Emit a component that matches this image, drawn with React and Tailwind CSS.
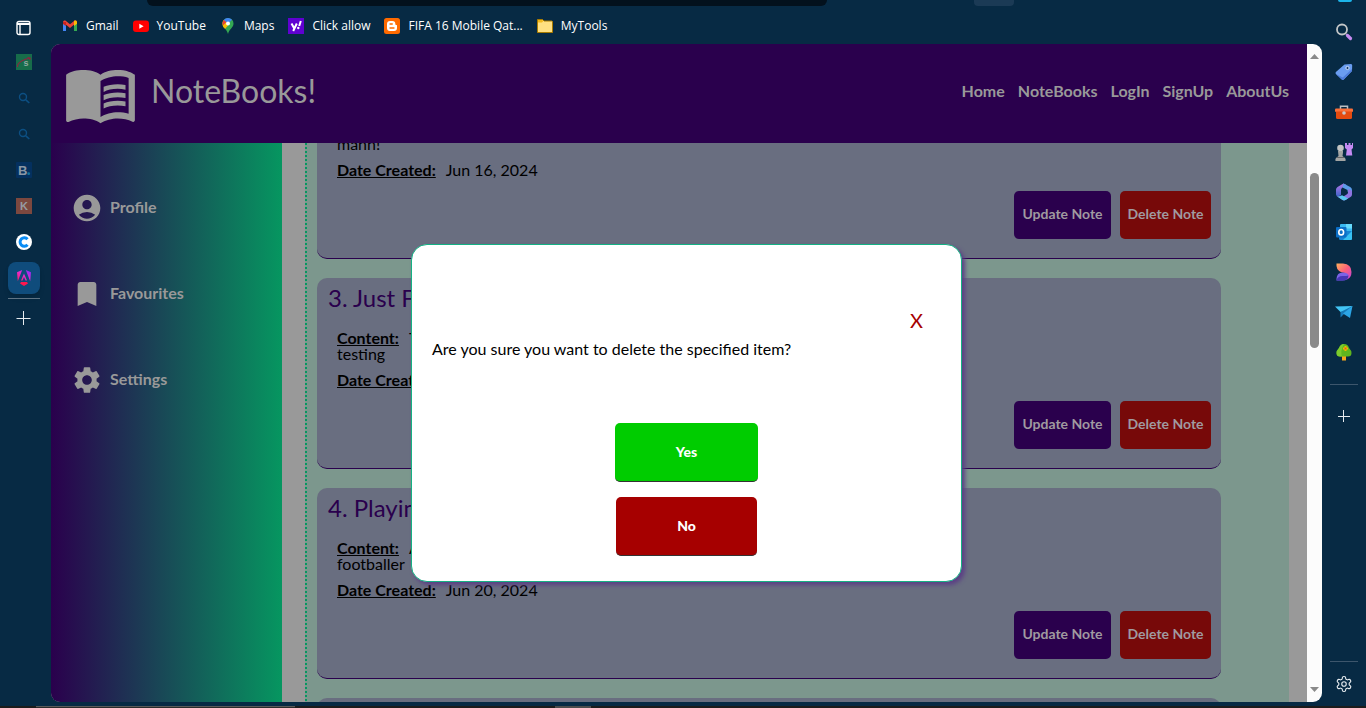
import { MdAccountCircle, MdBookmark, MdMenuBook, MdSettings } from "react-icons/md";
import { LuSettings } from "react-icons/lu";

const bookmarks = [
  { label: "Gmail", icon: GmailIcon },
  { label: "YouTube", icon: YouTubeIcon },
  { label: "Maps", icon: MapsIcon },
  { label: "Click allow", icon: YahooIcon },
  { label: "FIFA 16 Mobile Qat...", icon: BloggerIcon },
  { label: "MyTools", icon: FolderIcon },
];

const tabs = [
  { label: "Science", icon: ScienceIcon },
  { label: "Search", icon: DimSearchIcon },
  { label: "Search results", icon: DimSearchIcon },
  { label: "Booking", icon: BookingIcon },
  { label: "K", icon: KIcon },
  { label: "Coinbase", icon: CIcon },
];

const tools = [
  { label: "Search", icon: LensIcon },
  { label: "Shopping", icon: TagIcon },
  { label: "Tools", icon: ToolboxIcon },
  { label: "Games", icon: ChessIcon },
  { label: "Microsoft 365", icon: OfficeIcon },
  { label: "Outlook", icon: OutlookIcon },
  { label: "Designer", icon: DesignerIcon },
  { label: "Drop", icon: DropIcon },
  { label: "Tree", icon: TreeIcon },
];

const notes = [
  { title: "2. Good Morning", first: "Good morning", second: "mahn!", date: "Jun 16, 2024" },
  { title: "3. Just For Fun", first: "This note is for", second: "testing", date: "Jun 18, 2024" },
  { title: "4. Playing Football", first: "A very good", second: "footballer", date: "Jun 20, 2024" },
  { title: "5. Reading", first: "A new", second: "book", date: "Jun 21, 2024" },
];

function GmailIcon() {
  return (
    <svg viewBox="0 0 16 16" className="size-4">
      <path d="M1 4.5V13h3V7z" fill="#4285f4" />
      <path d="M15 4.5V13h-3V7z" fill="#34a853" />
      <path d="M1 4.2C1 2.6 2.8 2 4 3l4 3.2L12 3c1.2-1 3-.4 3 1.200L8 10z" fill="#ea4335" />
      <path d="M12 3c1.200-1 3-.4 3 1.200v1.600L12 8z" fill="#fbbc04" />
      <path d="M1 4.200V6l3 2V4z" fill="#c5221f" />
    </svg>
  );
}

function YouTubeIcon() {
  return (
    <svg viewBox="0 0 16 16" className="size-4">
      <rect y="2.500" width="16" height="11.500" rx="3" fill="#f00" />
      <path d="M6.300 5.700v5l4.300-2.500z" fill="#fff" />
    </svg>
  );
}

function MapsIcon() {
  return (
    <svg viewBox="0 0 16 16" className="size-4">
      <path d="M8 0a5.500 5.500 0 0 0-5.500 5.500C2.500 9.500 6.800 11 8 16c1.200-5 5.500-6.500 5.500-10.500A5.500 5.500 0 0 0 8 0z" fill="#34a853" />
      <path d="M3.800 2 8 5.500 4 10C3 8.700 2.500 7.200 2.500 5.500 2.500 4 3 3 3.800 2z" fill="#fbbc04" />
      <path d="M3.800 2 6 4 8 5.500 12 1.700A5.500 5.500 0 0 0 3.800 2z" fill="#4285f4" />
      <path d="M3.800 2 6.500 4.300 3 7.500C2.200 5.500 2.600 3.300 3.800 2z" fill="#ea4335" />
      <path d="M3 7.500 6.300 4.500 8 7.500 5 11z" fill="#fbbc04" />
      <circle cx="8" cy="5.500" r="2" fill="#fff" />
    </svg>
  );
}

function YahooIcon() {
  return (
    <svg viewBox="0 0 16 16" className="size-4">
      <rect width="16" height="16" fill="#5f01d1" />
      <path d="M3.500 5.500 6 10M8.800 5.500 5.200 13" stroke="#fff" strokeWidth="2" fill="none" />
      <path d="M12.800 3 11.200 8" stroke="#fff" strokeWidth="2" />
      <circle cx="10.300" cy="10" r="1.200" fill="#fff" />
    </svg>
  );
}

function BloggerIcon() {
  return (
    <svg viewBox="0 0 16 16" className="size-4">
      <rect width="16" height="16" rx="2.500" fill="#ff6a00" />
      <path d="M6 3h2.500a2.800 2.800 0 0 1 2.800 2.800c0 1 .4 1.200 1.200 1.200.4 0 .5.300.5.600V10a3 3 0 0 1-3 3H6a3 3 0 0 1-3-3V6a3 3 0 0 1 3-3z" fill="#fff" />
      <path d="M6 6h2.300M6 10h4" stroke="#ff6a00" strokeWidth="1.300" strokeLinecap="round" />
    </svg>
  );
}

function FolderIcon() {
  return (
    <svg viewBox="0 0 16 16" className="size-4">
      <path d="M.5 1.500h5l1.500 1.500H15l.5.500v11H.5z" fill="#ffe082" stroke="#a97b00" />
      <path d="M1 2h4.300l1 1L5 4.500H1z" fill="#f2b91d" />
    </svg>
  );
}

function ScienceIcon() {
  return (
    <svg viewBox="0 0 16 16" className="size-4">
      <rect width="16" height="16" fill="#176c4a" />
      <path d="M1.500 13C1 9 7 5 14.500 4M14.500 4l-3-.5M14.500 4l-1 2" stroke="#8c2440" fill="none" strokeWidth="1.200" />
      <text x="7.500" y="12" fontSize="9" fontWeight="700" fontFamily="Liberation Sans, sans-serif" fill="#8fa8a0">s</text>
    </svg>
  );
}

function DimSearchIcon() {
  return (
    <svg viewBox="0 0 16 16" className="size-4" fill="none" stroke="#0c4f83">
      <circle cx="7" cy="7" r="3.500" strokeWidth="1.400" />
      <path d="m9.800 9.800 3.500 3.200" strokeWidth="1.600" />
    </svg>
  );
}

function BookingIcon() {
  return (
    <svg viewBox="0 0 16 16" className="size-4">
      <rect width="16" height="16" rx="1" fill="#04305f" />
      <text x="2" y="13" fontSize="13" fontWeight="700" fontFamily="Liberation Sans, sans-serif" fill="#8b97a5">B</text>
      <circle cx="12.700" cy="11.700" r="1.400" fill="#11749d" />
    </svg>
  );
}

function KIcon() {
  return (
    <svg viewBox="0 0 16 16" className="size-4">
      <rect width="16" height="16" fill="#7c483f" />
      <text x="4" y="12" fontSize="11" fontWeight="700" fontFamily="Liberation Sans, sans-serif" fill="#969ba3">K</text>
    </svg>
  );
}

function CIcon() {
  return (
    <svg viewBox="0 0 16 16" className="size-4">
      <circle cx="8" cy="8" r="8" fill="#fff" />
      <path d="M11.500 5.300a4.200 4.200 0 1 0 0 5.400" fill="none" stroke="#0a8cf5" strokeWidth="3" />
    </svg>
  );
}

function AngularIcon() {
  return (
    <svg viewBox="0 0 16 16" className="size-4">
      <defs>
        <linearGradient id="ng" x1="0" y1="1" x2="1" y2="0">
          <stop offset="0" stopColor="#ff1f5a" />
          <stop offset=".5" stopColor="#e82ad0" />
          <stop offset="1" stopColor="#7a2bff" />
        </linearGradient>
      </defs>
      <path d="M6.200 0 1 2.200l.8 9zM9.800 0 15 2.200l-.8 9zM8 3.500 5 10.500h1.500L8 7l1.500 3.500H11z" fill="url(#ng)" />
      <path d="M5 12h6l1 1.500L8 16l-4-2.500z" fill="#ff174f" />
    </svg>
  );
}

function LensIcon() {
  return (
    <svg viewBox="0 0 18 18" className="size-[18px]" fill="none">
      <circle cx="7" cy="6.500" r="5" stroke="#c3c6c8" strokeWidth="1.800" />
      <path d="m11 11 1.500 1.500" stroke="#9a9fa5" strokeWidth="1.800" />
      <path d="m12.500 12.500 3 3" stroke="#c58af0" strokeWidth="3.200" strokeLinecap="round" />
    </svg>
  );
}

function TagIcon() {
  return (
    <svg viewBox="0 0 18 18" className="size-[18px]">
      <path d="M9.500 1.500 16 1q1.300 0 1.200 1.500L17 8l-8.200 8.500q-1 .8-2 0L.9 10.900q-.8-1 0-2z" fill="#6a9df0" />
      <path d="m.9 10.900 5.900 5.600q1 .8 2 0L17 8v-2L7.800 14.500z" fill="#4d7ddb" />
      <circle cx="12.500" cy="5" r="1.600" fill="#173b6b" stroke="#cfe0fa" />
    </svg>
  );
}

function ToolboxIcon() {
  return (
    <svg viewBox="0 0 18 18" className="size-[18px]">
      <path d="M5.500 6V3.200h7V6" fill="none" stroke="#bcc0c3" strokeWidth="1.500" />
      <rect x="0" y="5.500" width="18" height="3.500" rx="1" fill="#f9703a" />
      <path d="M1 8.500h16v6q0 1.500-1.500 1.500h-13Q1 16 1 14.500z" fill="#e44b10" />
      <circle cx="9" cy="10" r="1.800" fill="#c7c9cc" />
    </svg>
  );
}

function ChessIcon() {
  return (
    <svg viewBox="0 0 18 18" className="size-[18px]">
      <path d="M10 0h2v2h1.500V0h2v2H17V0h1v5l-1.500 1.500.8 6H11l.8-6L10 5z" fill="#c58af3" />
      <circle cx="5.500" cy="5" r="3.300" fill="#c3c4c3" />
      <path d="M3 8h5v1.500L7.500 13 10 15q1 1 .5 3H.5Q0 16 1 15l2.500-2z" fill="#a3a5a3" />
      <path d="M2 14.500h7" stroke="#666" />
    </svg>
  );
}

function OfficeIcon() {
  return (
    <svg viewBox="0 0 18 18" className="size-[18px]">
      <defs>
        <linearGradient id="of" x1="0" y1="0" x2="0" y2="1">
          <stop offset="0" stopColor="#b678e8" />
          <stop offset="1" stopColor="#3e62c9" />
        </linearGradient>
      </defs>
      <path d="M8.500.5 2.500 4Q1 5 1 6.500v5Q1 13 3 13.500l3-1.500V7q0-1.500 1.500-2.500L11.500 2z" fill="url(#of)" />
      <path d="m8.500.5 6.700 3.600Q17 5 17 7v4l-4.500-2.500V7L7.500 4.500z" fill="#5a9be8" />
      <path d="M17 8.500v3q0 1.500-1.500 2.500l-5 3q-1.500.8-3 0L1.500 13q2 1.200 4.500-.5l2 1.200 4-2.500q1-.7 1-2V6q4 1 4 2.500z" fill="#8e74e0" />
      <path d="m2 13.200 5.500 3.800q1.500.8 3 0l2.500-1.500L7 12.200q-2.500 2-5 1z" fill="#57c9ee" />
    </svg>
  );
}

function OutlookIcon() {
  return (
    <svg viewBox="0 0 18 18" className="size-[18px]">
      <rect x="5" y="1" width="12" height="9" rx="1" fill="#39b9f1" />
      <path d="M11 1h6v4.500h-6z" fill="#66dafc" />
      <path d="M4 8h13v7.500q0 1.500-1.500 1.500h-10Q4 17 4 15.500z" fill="#1784d2" />
      <path d="m17 8-9 9h7.500q1.500 0 1.500-1.500z" fill="#37c1f3" />
      <rect x="1" y="4" width="10.500" height="10.500" rx="1" fill="#0b6fc7" />
      <ellipse cx="6.200" cy="9.200" rx="2.400" ry="2.700" fill="none" stroke="#fff" strokeWidth="1.600" />
    </svg>
  );
}

function DesignerIcon() {
  return (
    <svg viewBox="0 0 18 18" className="size-[18px]">
      <defs>
        <linearGradient id="d1" x1="0" y1="0" x2="1" y2="1">
          <stop offset="0" stopColor="#ffb05c" />
          <stop offset=".5" stopColor="#fb5f7a" />
          <stop offset="1" stopColor="#c040e0" />
        </linearGradient>
      </defs>
      <path d="M1.500.5H8q8.500.5 8.500 8.500 0 5.500-4.500 7.500 1-4.500-2-6.500-8-1-8.500-7z" fill="url(#d1)" />
      <path d="M1.500 17.500v-2q.5-6 6-6 6 0 6 3.500-.500 4.500-6 4.500z" fill="#7a63e6" />
      <path d="M1.500 17.500q1-5 7-4.500 3 0 5-.5-.5 5-6 5z" fill="#4636b4" />
    </svg>
  );
}

function DropIcon() {
  return (
    <svg viewBox="0 0 18 18" className="size-[18px]">
      <path d="M0 3.500 17.500 3 11 8.500 5.500 9z" fill="#42c5f5" />
      <path d="M17.500 3 5.500 9v5.500l3-3z" fill="#1679b8" />
      <path d="M17.500 3 8 10.500l7 4.500z" fill="#2ba5e6" />
    </svg>
  );
}

function TreeIcon() {
  return (
    <svg viewBox="0 0 18 18" className="size-[18px]">
      <rect x="7" y="12" width="4" height="5.500" fill="#f3a51d" />
      <path d="M9 1Q13 1 14 5q2.500 2.500 2.500 5 0 3.500-3.500 3.500H5Q1.500 13.500 1.500 10 1.500 7.500 4 5 5 1 9 1z" fill="#5fb51e" />
      <path d="M9 1Q6 1 4 5 1.500 7.500 1.500 10q0 3.500 3.500 3.500h2Q5 8 9 1z" fill="#7ccb2c" />
      <path d="M10.500 3v5M8 5.500h5" stroke="#f4b400" strokeWidth="2" />
      <circle cx="10.500" cy="5.500" r="1" fill="#e8542b" />
    </svg>
  );
}

function PlusIcon() {
  return (
    <svg viewBox="0 0 16 16" className="size-4" stroke="#e6ebef">
      <path d="M7.500 0v14M.5 7.500h14" />
    </svg>
  );
}

function LeftRail() {
  return (
    <aside className="flex w-[51px] shrink-0 flex-col pr-[3px]">
      <button aria-label="Tab actions" className="mt-[10px] flex h-9 items-center justify-center">
        <svg viewBox="0 0 16 16" className="size-4" fill="none" stroke="#fff" strokeWidth="1.400">
          <rect x="1" y="1.500" width="13" height="13" rx="2" />
          <path d="M1 4h13" strokeWidth="2" />
          <path d="M4 4v10.500" />
        </svg>
      </button>
      <div className="-mt-[2px] flex flex-col">
        {tabs.map(({ label, icon: Icon }) => (
          <button key={label} aria-label={label} className="flex h-9 items-center justify-center">
            <Icon />
          </button>
        ))}
      </div>
      <button
        aria-label="NoteBooks"
        className="mx-2 mt-[2px] flex h-8 items-center justify-center rounded-lg bg-[#0f4c7c] shadow-md"
      >
        <AngularIcon />
      </button>
      <hr className="mx-2 mt-1 border-[#5f7485]" />
      <button aria-label="New tab" className="mt-3 flex justify-center">
        <PlusIcon />
      </button>
    </aside>
  );
}

function RightRail() {
  return (
    <aside className="flex w-11 shrink-0 flex-col">
      <div className="flex h-3 justify-center">
        <div className="mr-[-2px] h-[2px] w-[14px] rounded-b bg-[#1cb5ea]" />
      </div>
      {tools.map(({ label, icon: Icon }) => (
        <button key={label} aria-label={label} className="flex h-10 items-center justify-center">
          <Icon />
        </button>
      ))}
      <hr className="mx-2 mt-3 border-[#3d566c]" />
      <button aria-label="Customize" className="mt-[25px] flex justify-center">
        <svg viewBox="0 0 12 12" className="size-3" stroke="#e6ebef">
          <path d="M5.500 0v12M0 6.500h12" />
        </svg>
      </button>
      <hr className="mx-2 mt-auto border-[#3d566c]" />
      <button aria-label="Settings" className="mt-[13px] mb-[13px] flex justify-center text-[#e6ebef]">
        <LuSettings size={18} strokeWidth={1.5} />
      </button>
    </aside>
  );
}

function NoteCard({ note }) {
  return (
    <article className="flex flex-col rounded-[10px] border-b border-[#2a004d] bg-[#696e80] pt-2 pr-[10px] pb-[19px] pl-5 text-black">
      <h2 className="-ml-[9px] text-2xl leading-6 text-[#2a004d]">{note.title}</h2>
      <p className="mt-5 text-base leading-4">
        <b className="mr-[10px] underline">Content:</b>
        {note.first}
        <br />
        {note.second}
      </p>
      <p className="mt-[10px] text-base leading-4">
        <b className="mr-[10px] underline">Date Created:</b>
        {note.date}
      </p>
      <div className="mt-[13px] flex justify-end gap-[9px] text-sm font-bold text-[#a09aa0]">
        <button className="h-12 w-[97px] rounded-[5px] bg-[#2a004d] pb-[2px]">Update Note</button>
        <button className="h-12 w-[91px] rounded-[5px] bg-[#770909] pb-[2px]">Delete Note</button>
      </div>
    </article>
  );
}

function SideLink({ icon: Icon, label }) {
  return (
    <a href="#" className="flex items-center gap-[7px] text-base font-bold">
      <Icon size={32} />
      <span className="pb-[3px]">{label}</span>
    </a>
  );
}

function Page() {
  return (
    <div className="flex min-w-0 flex-1 flex-col bg-[#999999] font-['Lato',sans-serif]">
      <header className="flex h-[99px] shrink-0 items-center justify-between bg-[#2a004d] pr-[18px] pl-3 text-[#999999]">
        <div className="flex items-center gap-[13px]">
          <MdMenuBook size={75} />
          <h1 className="pb-[6px] text-[32px] leading-10">NoteBooks!</h1>
        </div>
        <nav className="flex gap-[13px] pb-[6px] text-base font-bold">
          <a href="#">Home</a>
          <a href="#">NoteBooks</a>
          <a href="#">LogIn</a>
          <a href="#">SignUp</a>
          <a href="#">AboutUs</a>
        </nav>
      </header>
      <div className="flex min-h-0 flex-1">
        <nav className="flex w-[231px] shrink-0 flex-col gap-[54px] bg-linear-to-r/srgb from-[#2a004d] to-[#069660] pt-[49px] pl-5 text-[#999999]">
          <SideLink icon={MdAccountCircle} label="Profile" />
          <SideLink icon={MdBookmark} label="Favourites" />
          <SideLink icon={MdSettings} label="Settings" />
        </nav>
        <main className="ml-[23px] mr-[18px] flex-1 overflow-hidden">
          <div className="-mt-[75px] flex flex-col gap-[19px] border-l-2 border-dotted border-[#069660] bg-[#7c978d] pr-[68px] pl-[10px]">
            {notes.map((note) => (
              <NoteCard key={note.title} note={note} />
            ))}
          </div>
        </main>
      </div>
    </div>
  );
}

function Scrollbar() {
  return (
    <div aria-hidden="true" className="flex w-[15px] shrink-0 flex-col items-center bg-[#fcfcfc] pt-[10px] pb-[10px]">
      <svg viewBox="0 0 9 5" className="h-[5px] w-[9px]">
        <path d="M0 5 4.500 0 9 5z" fill="#8a8a8a" />
      </svg>
      <div className="mt-[114px] h-[175px] w-[9px] rounded-full bg-[#8a8a8a]" />
      <svg viewBox="0 0 9 5" className="mt-auto h-[5px] w-[9px]">
        <path d="M0 0 4.500 5 9 0z" fill="#8a8a8a" />
      </svg>
    </div>
  );
}

function ConfirmDialog() {
  return (
    <div className="absolute inset-0 flex items-start justify-center pt-[200px] font-['Lato',sans-serif]">
      <div
        role="dialog"
        aria-label="Confirm delete"
        className="flex w-full max-w-[551px] flex-col rounded-2xl border border-[#14b184] bg-white px-5 pt-[65px] pb-[25px] shadow-[3px_3px_4px_#5b3f85]"
      >
        <button aria-label="Close" className="mr-[18px] self-end text-xl leading-5 text-[#a60000]">
          X
        </button>
        <p className="mt-[7px] text-base leading-6 text-black">
          Are you sure you want to delete the specified item?
        </p>
        <div className="mt-[62px] flex flex-col items-center gap-[15px] text-sm font-black text-white">
          <button className="h-[59px] w-[143px] rounded-[5px] border-b border-[#333333] bg-[#00cc00] pb-px">Yes</button>
          <button className="h-[59px] w-[141px] rounded-[5px] border-b border-[#333333] bg-[#a60000] pb-px">No</button>
        </div>
      </div>
    </div>
  );
}

export default function App() {
  return (
    <div className="flex h-screen flex-col overflow-hidden bg-[#072a44]">
      <div className="flex min-h-0 flex-1">
        <LeftRail />
        <div className="flex min-w-0 flex-1 flex-col pb-1">
          <div className="flex h-[6px] shrink-0">
            <div className="ml-24 h-[6px] w-[680px] rounded-b-lg bg-[#03111d]" />
            <div className="ml-[147px] h-[6px] w-10 rounded-b bg-[#1b3a55]" />
          </div>
          <nav className="flex h-[38px] shrink-0 items-center gap-[14px] pt-[2px] pl-[11px] font-['Open_Sans',sans-serif] text-xs text-white">
            {bookmarks.map(({ label, icon: Icon }) => (
              <a key={label} href="#" className="flex items-center gap-2">
                <Icon />
                {label}
              </a>
            ))}
          </nav>
          <div className="relative flex min-h-0 flex-1 overflow-hidden rounded-[9px]">
            <Page />
            <Scrollbar />
            <ConfirmDialog />
          </div>
        </div>
        <RightRail />
      </div>
      <div className="flex h-[2px] shrink-0 bg-[#1c1c1c]">
        <div className="ml-9 h-[2px] w-[259px] border-t border-[#5a5a5a] bg-[#2b2b2b]" />
        <div className="ml-[260px] h-[2px] w-9 bg-[#4c4c4c]" />
      </div>
    </div>
  );
}
